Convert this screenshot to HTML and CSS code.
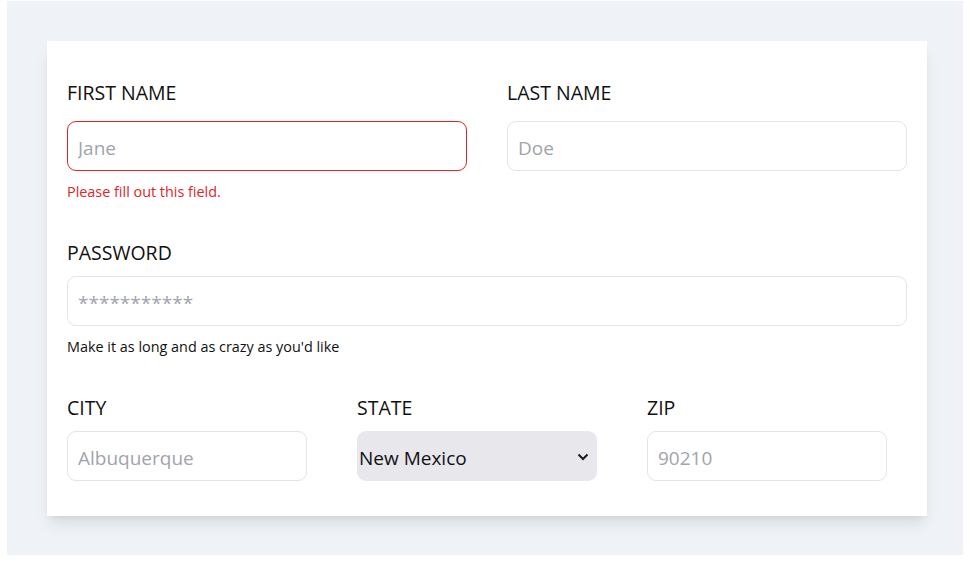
FILE: index.html
```html
<!DOCTYPE html>
<html lang="en">
<head>
<meta charset="utf-8">
<title>Form</title>
<link rel="stylesheet" href="styles.css">
</head>
<body>
<div class="page">
  <form class="card">
    <div class="row row-first">
      <div class="field half">
        <label class="label">FIRST NAME</label>
        <input class="input input-error" type="text" placeholder="Jane">
        <p class="error">Please fill out this field.</p>
      </div>
      <div class="field half">
        <label class="label">LAST NAME</label>
        <input class="input" type="text" placeholder="Doe">
      </div>
    </div>
    <div class="row">
      <div class="field full">
        <label class="label">PASSWORD</label>
        <input class="input" type="text" placeholder="***********">
        <p class="help">Make it as long and as crazy as you'd like</p>
      </div>
    </div>
    <div class="row row-last">
      <div class="field third">
        <label class="label">CITY</label>
        <input class="input" type="text" placeholder="Albuquerque">
      </div>
      <div class="field third">
        <label class="label">STATE</label>
        <div class="select-wrap">
          <select class="select">
            <option>New Mexico</option>
            <option>Missouri</option>
            <option>Texas</option>
          </select>
          <svg class="chevron" width="12" height="8" viewBox="0 0 12 8"><path d="M1.5 1.5 L6 6 L10.5 1.5" fill="none" stroke="#1a1a1a" stroke-width="2"/></svg>
        </div>
      </div>
      <div class="field third">
        <label class="label">ZIP</label>
        <input class="input" type="text" placeholder="90210">
      </div>
    </div>
  </form>
</div>
</body>
</html>
```
FILE: styles.css
```css
* { box-sizing: border-box; }
html, body { background: #ffffff; }
body {
  margin: 1px 8px 0 7px;
  font-family: "Open Sans", "Noto Sans", sans-serif;
  color: #111111;
}
.page {
  background: #eff3f8;
  padding: 40px 36px 39px 40px;
  height: 554px;
}
.card {
  width: 880px;
  height: 475px;
  background: #ffffff;
  padding: 40px 20px 35px 20px;
  box-shadow: 0 10px 15px -3px rgba(0,0,0,0.10), 0 4px 6px -2px rgba(0,0,0,0.05);
}
.row {
  display: flex;
  gap: 40px;
  margin-bottom: 39px;
}
.row-last { gap: 50px; margin-bottom: 0; }
.field { display: flex; flex-direction: column; }
.half { width: 400px; }
.full { width: 840px; }
.third { width: 240px; }
.label {
  display: block;
  font-size: 19.5px;
  line-height: 24px;
  height: 24px;
  color: #111111;
  margin-bottom: 11px;
}
.row-first .label { margin-bottom: 16px; }
.input {
  display: block;
  width: 100%;
  height: 50px;
  border: 1px solid #e4e4e7;
  border-radius: 9px;
  padding: 3px 10px 0 10px;
  font-family: inherit;
  font-size: 19px;
  color: #111111;
  background: #ffffff;
  outline: none;
}
.input::placeholder { color: #a1a4ad; }
.input-error { border-color: #dc2626; }
.error, .help {
  margin: 11px 0 0 0;
  font-size: 14.4px;
  line-height: 20px;
}
.error { color: #dc2626; }
.help { color: #111111; }
.select-wrap { position: relative; width: 240px; height: 50px; }
.select {
  -webkit-appearance: none;
  appearance: none;
  width: 100%;
  height: 50px;
  border: none;
  border-radius: 9px;
  background: #e8e7ec;
  padding: 3px 2px 0 2px;
  font-family: inherit;
  font-size: 19px;
  color: #111111;
  outline: none;
}
.chevron {
  position: absolute;
  right: 8px;
  top: 22px;
}
```
